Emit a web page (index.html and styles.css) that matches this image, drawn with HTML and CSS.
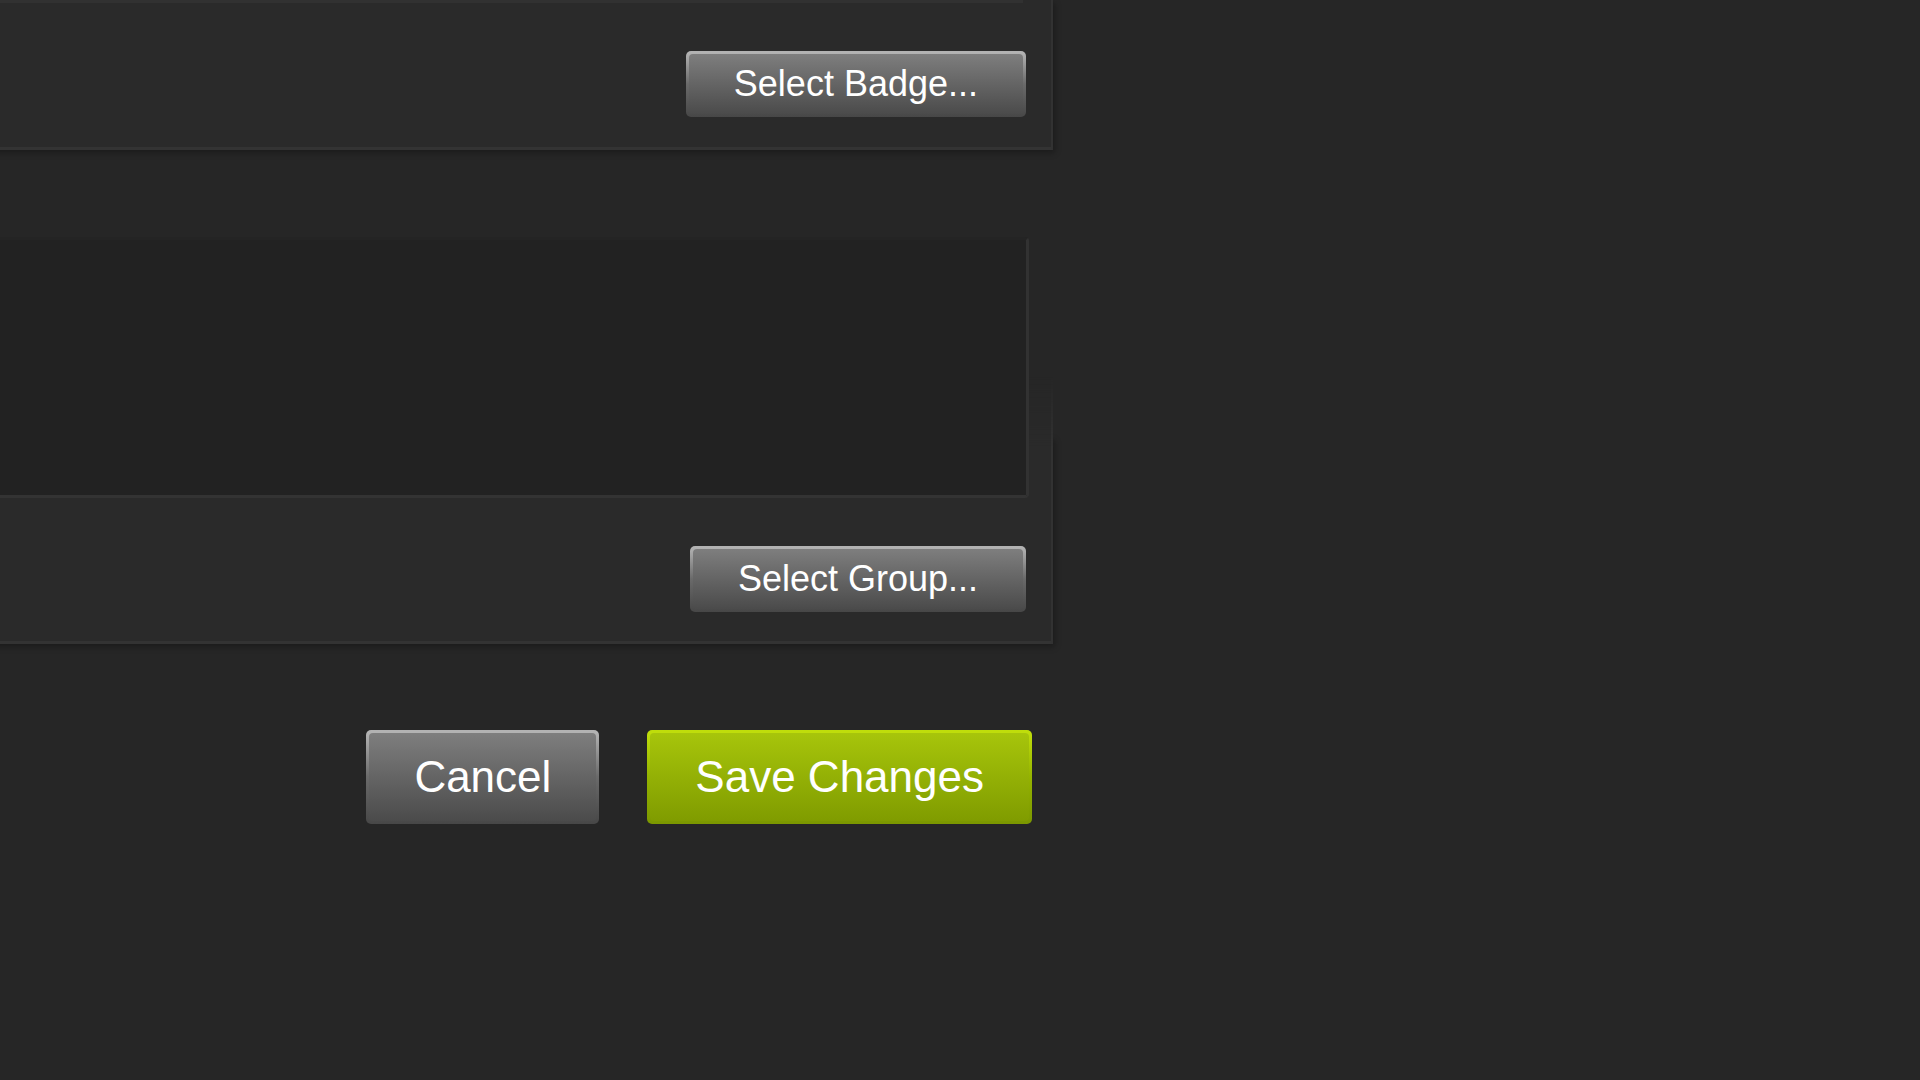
FILE: index.html
```html
<!DOCTYPE html>
<html lang="en">
<head>
<meta charset="utf-8">
<title>Edit Group</title>
<link rel="stylesheet" href="styles.css">
</head>
<body>
<div class="page">
  <section class="panel panel-top">
    <div class="field-edge"></div>
    <div class="row-right">
      <a class="btn btn-grey btn-small" href="#"><span>Select Badge...</span></a>
    </div>
  </section>

  <section class="panel-group">
    <textarea class="textarea" aria-label="Description"></textarea>
    <div class="row-right">
      <a class="btn btn-grey btn-small" href="#"><span>Select Group...</span></a>
    </div>
  </section>

  <div class="actions">
    <a class="btn btn-grey btn-large" href="#"><span>Cancel</span></a>
    <a class="btn btn-green btn-large" href="#"><span>Save Changes</span></a>
  </div>
</div>
</body>
</html>
```

FILE: styles.css
```css
html, body {
  margin: 0;
  padding: 0;
  background: #262626;
  height: 100%;
  overflow: hidden;
}

body {
  font-family: "Liberation Sans", Arial, sans-serif;
  color: #fff;
}

.page {
  margin-left: -40px;
  width: 1093px;
}

/* ---------- panels ---------- */
.panel {
  box-sizing: border-box;
  background: #2a2a2a;
  border-right: 2px solid #323232;
  border-bottom: 3px solid #333333;
  box-shadow: 2px 3px 6px rgba(0, 0, 0, 0.28);
}

.panel-top {
  height: 150px;
}

.field-edge {
  width: 1063px;
  height: 3px;
  background: #313131;
}

.row-right {
  display: flex;
  justify-content: flex-end;
}

.panel-top .row-right {
  margin-top: 48px;
  padding-right: 25px;
}

/* second panel: its box fades in below the top of the textarea */
.panel-group {
  position: relative;
  z-index: 0;
  margin-top: 87px;
  padding-bottom: 32px;
}

.panel-group::before {
  content: "";
  position: absolute;
  z-index: -1;
  left: 0;
  right: -8px;
  top: 140px;
  bottom: -8px;
  box-sizing: border-box;
  border-right: 8px solid transparent;
  border-bottom: 8px solid transparent;
  background:
    linear-gradient(#323232, #323232) right bottom / 2px 100% no-repeat content-box,
    linear-gradient(#333333, #333333) left bottom / 100% 3px no-repeat content-box,
    linear-gradient(#2a2a2a, #2a2a2a) content-box;
  box-shadow: none;
  -webkit-mask-image: linear-gradient(to bottom, transparent 0, #000 70px);
  mask-image: linear-gradient(to bottom, transparent 0, #000 70px);
}

.panel-group::after {
  content: "";
  position: absolute;
  z-index: -2;
  left: 0;
  right: 0;
  top: 200px;
  bottom: 0;
  box-shadow: 2px 3px 6px rgba(0, 0, 0, 0.28);
}

.textarea {
  display: block;
  box-sizing: border-box;
  width: 1069px;
  height: 261px;
  margin: 0;
  padding: 0;
  resize: none;
  overflow: hidden;
  background: #222222;
  border: 3px solid;
  border-color: #242424 #323232 #333333 #242424;
  border-radius: 4px;
  outline: none;
}

.panel-group .row-right {
  margin-top: 48px;
  padding-right: 27px;
}

/* ---------- buttons ---------- */
.btn {
  display: inline-block;
  padding: 3px;
  border-radius: 5px;
  text-decoration: none;
  color: #fff;
}

.btn span {
  display: block;
  border-radius: 4px;
  padding: 0 45px;
  white-space: nowrap;
}

.btn-small span {
  font-size: 36px;
  line-height: 60px;
}

.btn-large span {
  font-size: 44px;
  line-height: 88px;
}

.btn-grey {
  background: linear-gradient(to bottom, #b2b2b2 3%, #6a6a6a 50%, #474747 100%);
}

.btn-grey span {
  background: linear-gradient(to bottom, #7e7e7e 0%, #4b4b4b 100%);
}

.btn-green {
  background: linear-gradient(to bottom, #bfdd0b 3%, #94b300 50%, #7b9700 100%);
}

.btn-green span {
  background: linear-gradient(to bottom, #a7c50b 0%, #809c00 100%);
}

/* ---------- bottom actions ---------- */
.actions {
  display: flex;
  justify-content: flex-end;
  gap: 48px;
  margin-top: 86px;
  padding-right: 21px;
}
```
